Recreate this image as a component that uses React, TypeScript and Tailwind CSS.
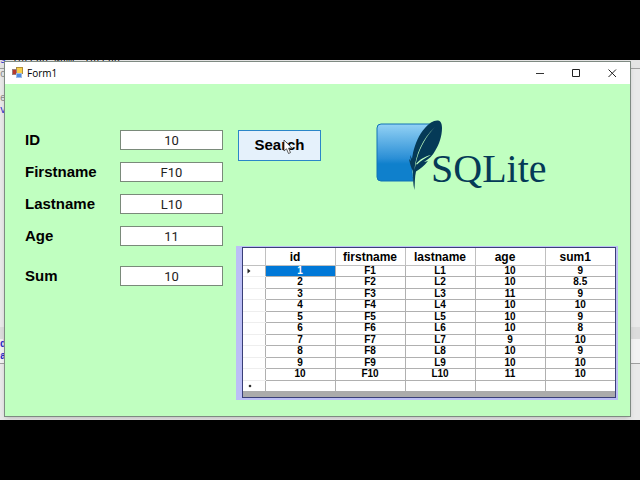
import { useState } from "react";

type Row = {
  id: number;
  firstname: string;
  lastname: string;
  age: number;
  sum1: number;
};

const rows: Row[] = [
  { id: 1, firstname: "F1", lastname: "L1", age: 10, sum1: 9 },
  { id: 2, firstname: "F2", lastname: "L2", age: 10, sum1: 8.5 },
  { id: 3, firstname: "F3", lastname: "L3", age: 11, sum1: 9 },
  { id: 4, firstname: "F4", lastname: "L4", age: 10, sum1: 10 },
  { id: 5, firstname: "F5", lastname: "L5", age: 10, sum1: 9 },
  { id: 6, firstname: "F6", lastname: "L6", age: 10, sum1: 8 },
  { id: 7, firstname: "F7", lastname: "L7", age: 9, sum1: 10 },
  { id: 8, firstname: "F8", lastname: "L8", age: 10, sum1: 9 },
  { id: 9, firstname: "F9", lastname: "L9", age: 10, sum1: 10 },
  { id: 10, firstname: "F10", lastname: "L10", age: 11, sum1: 10 },
];

const columns: { key: keyof Row; className: string }[] = [
  { key: "id", className: "pr-[10px]" },
  { key: "firstname", className: "" },
  { key: "lastname", className: "" },
  { key: "age", className: "pr-[10px]" },
  { key: "sum1", className: "pr-[10px]" },
];

const fields = [
  { name: "id", label: "ID" },
  { name: "firstname", label: "Firstname" },
  { name: "lastname", label: "Lastname" },
  { name: "age", label: "Age" },
  { name: "sum", label: "Sum" },
];

const SqliteLogo = () => (
  <svg width="172" height="74" viewBox="0 0 172 74" role="img" aria-label="SQLite">
    <defs>
      <linearGradient id="tile" x1="0" y1="0" x2="0" y2="1">
        <stop offset="0" stopColor="#93d2f5" />
        <stop offset="0.6" stopColor="#2b8fd6" />
        <stop offset="0.7" stopColor="#0f80cc" />
        <stop offset="1" stopColor="#0f80cc" />
      </linearGradient>
    </defs>
    <path
      d="M5 4H54C45 14 38 28 36 42C36 49 36 56 37 61H5Q1 61 1 57V8Q1 4 5 4Z"
      fill="url(#tile)"
      stroke="#1273b5"
      strokeWidth="1"
    />
    <path
      d="M62 0.5C58 0 53 3 49 8C43 14 39 24 37 33L36 39L34 35L35 41L33 39C34 44 35 48 37 51C37 58 37 64 38.4 70C39 64 38.6 57 40 51.5C44 49 48 46 52 41L48 42C53 39 57 35 59 31C63 25 66 16 66 8C66 4 65 1 62 0.5Z"
      fill="#053a57"
    />
    <path
      d="M59 7C51 15 44 27 40.5 40L38.5 50C39.5 35 46 19 59 7Z"
      fill="#c0ffc0"
    />
    <path d="M40 44C44 39 49 36.5 55 35C49 38 45 40.5 41 44.5Z" fill="#c0ffc0" />
    <text
      x="55"
      y="62"
      fill="#053a57"
      fontFamily='"Liberation Serif", serif'
      fontSize="40"
    >
      SQLite
    </text>
  </svg>
);

const FormIcon = () => (
  <svg width="11" height="11" viewBox="0 0 11 11" aria-hidden="true">
    <rect x="4.5" y="0.5" width="6" height="6" fill="#f7cf4a" stroke="#b08d3a" />
    <rect x="0.5" y="2.5" width="4" height="5" fill="#b8392c" stroke="#9a7f7c" />
    <rect x="4.5" y="6.5" width="5" height="4" fill="#4f8be0" stroke="#9dbbe6" />
  </svg>
);

// code editor that shows around the edges of the form
const EditorBackdrop = () => (
  <div
    aria-hidden="true"
    className="absolute inset-0 overflow-hidden bg-[#e9e9e9] font-['Liberation_Mono',monospace] text-[10px] leading-[12px] text-[#2a2ac8]"
  >
    <div className="h-[9px] border-b border-[#a0a0a0] bg-[#e4e4e4] leading-[2px] whitespace-pre">
      s <span className="text-black">Thread Name Thread</span>
    </div>
    <div className="h-[258px]">
      <div className="text-[#888]">c</div>
      <div className="mt-3 text-[#888]">e</div>
      <div>vi</div>
    </div>
    <div className="h-[12px] bg-[#dcdcdc]" />
    <div className="border-b border-[#a0a0a0] bg-[#f2f2f2] font-bold">
      <div>d</div>
      <div>a</div>
    </div>
  </div>
);

const App = () => {
  const [values, setValues] = useState<Record<string, string>>({
    id: "10",
    firstname: "F10",
    lastname: "L10",
    age: "11",
    sum: "10",
  });

  const handleSearch = (e: React.FormEvent) => {
    e.preventDefault();
    const found = rows.find((r) => String(r.id) === values.id);
    if (!found) return;
    setValues({
      id: String(found.id),
      firstname: found.firstname,
      lastname: found.lastname,
      age: String(found.age),
      sum: String(found.sum1),
    });
  };

  return (
    <div className="min-h-screen bg-black py-[60px] font-['Liberation_Sans',sans-serif] text-black">
      <div className="relative pt-px pr-[9px] pb-[3px] pl-1">
        <EditorBackdrop />
        <div className="relative border border-[#7f8a82] bg-[#c0ffc0] shadow-md">
          <header className="flex h-[22px] items-center bg-white pr-[12px] pb-px pl-[7px]">
            <FormIcon />
            <h1 className="ml-1 flex-1 font-['Open_Sans',sans-serif] text-[10px] leading-[12px]">
              Form1
            </h1>
            <div className="flex gap-6">
              <button type="button" aria-label="Minimize">
                <svg width="12" height="10" viewBox="0 0 12 10" stroke="#333">
                  <path d="M2 5.5H10" />
                </svg>
              </button>
              <button type="button" aria-label="Maximize">
                <svg width="12" height="10" viewBox="0 0 12 10" fill="none" stroke="#222">
                  <path d="M2.5 1.5H9.5V8.5H2.5Z" />
                </svg>
              </button>
              <button type="button" aria-label="Close">
                <svg width="12" height="10" viewBox="0 0 12 10" stroke="#222">
                  <path d="M2.5 1.5L10 9M10 1.5L2.5 9" />
                </svg>
              </button>
            </div>
          </header>

          <form
            onSubmit={handleSearch}
            className="flex gap-[13px] pt-9 pr-3 pb-4 pl-5"
          >
            <div className="flex w-[198px] flex-col gap-3 pt-[10px]">
              {fields.map((f) => (
                <div
                  key={f.name}
                  className="flex h-5 items-center justify-between last:mt-2"
                >
                  <label htmlFor={f.name} className="text-[15px] leading-5 font-bold">
                    {f.label}
                  </label>
                  <input
                    id={f.name}
                    value={values[f.name]}
                    onChange={(e) =>
                      setValues({ ...values, [f.name]: e.target.value })
                    }
                    className="h-5 w-[103px] border border-[#7a8a7a] bg-white text-center font-['Roboto',sans-serif] text-[13px] text-[#222]"
                  />
                </div>
              ))}
            </div>

            <div className="min-w-0 flex-1">
              <div className="flex h-[126px] items-start gap-[55px] pl-0.5">
                <div className="relative mt-[10px]">
                  <button
                    type="submit"
                    className="h-[31px] w-[83px] border border-[#2a86c8] bg-[#e5f1fb] text-[15px] font-bold"
                  >
                    Search
                  </button>
                  <svg
                    className="pointer-events-none absolute top-[9px] left-[45px]"
                    width="11"
                    height="16"
                    viewBox="0 0 11 16"
                    aria-hidden="true"
                  >
                    <path
                      d="M1 1V12L3.5 9.8L5.5 14.5L7.5 13.6L5.6 9.2H9Z"
                      fill="#fff"
                      stroke="#333"
                      strokeWidth="0.8"
                    />
                  </svg>
                </div>
                <SqliteLogo />
              </div>

              <div className="bg-[#bcbff6] pt-px pr-[2px] pb-[2px] pl-[6px]">
                <div className="border border-[#3a3f78] bg-[#ababab] pb-[6px]">
                  <table className="w-full table-fixed border-collapse bg-white text-center text-[10px] leading-[10px] font-bold">
                    <thead>
                      <tr className="h-[17px] text-[12px]">
                        <th className="w-[22px] border-r border-b border-[#c0c0c0] p-0" />
                        {columns.map((c) => (
                          <th
                            key={c.key}
                            className="border-r border-b border-[#c0c0c0] p-0 pt-0.5 last:border-r-0"
                          >
                            <div className={c.className}>{c.key}</div>
                          </th>
                        ))}
                      </tr>
                    </thead>
                    <tbody>
                      {rows.map((row, i) => (
                        <tr key={row.id} className="h-[11px] even:h-[12px]">
                          <td className="border-r border-b border-r-[#b0b0b0] border-b-[#eeeeee] p-0">
                            {i === 0 && (
                              <svg
                                className="ml-1"
                                width="4"
                                height="6"
                                viewBox="0 0 4 6"
                                aria-hidden="true"
                              >
                                <path d="M0.5 0.5L3.5 3L0.5 5.5Z" fill="#222" />
                              </svg>
                            )}
                          </td>
                          {columns.map((c) => (
                            <td
                              key={c.key}
                              className={`border-r border-b border-[#b0b0b0] p-0 last:border-r-0 ${
                                i === 0 && c.key === "id"
                                  ? "bg-[#0078d7] text-white"
                                  : ""
                              }`}
                            >
                              {row[c.key]}
                            </td>
                          ))}
                        </tr>
                      ))}
                      {/* empty row for a new record */}
                      <tr className="h-[11px]">
                        <td className="border-r border-[#b0b0b0] p-0">
                          <svg
                            className="ml-[5px]"
                            width="4"
                            height="4"
                            viewBox="0 0 4 4"
                            aria-hidden="true"
                          >
                            <circle cx="2" cy="2" r="1.3" fill="#333" />
                          </svg>
                        </td>
                        {columns.map((c) => (
                          <td
                            key={c.key}
                            className="border-r border-[#b0b0b0] p-0 last:border-r-0"
                          />
                        ))}
                      </tr>
                    </tbody>
                  </table>
                </div>
              </div>
            </div>
          </form>
        </div>
      </div>
    </div>
  );
};

export default App;
